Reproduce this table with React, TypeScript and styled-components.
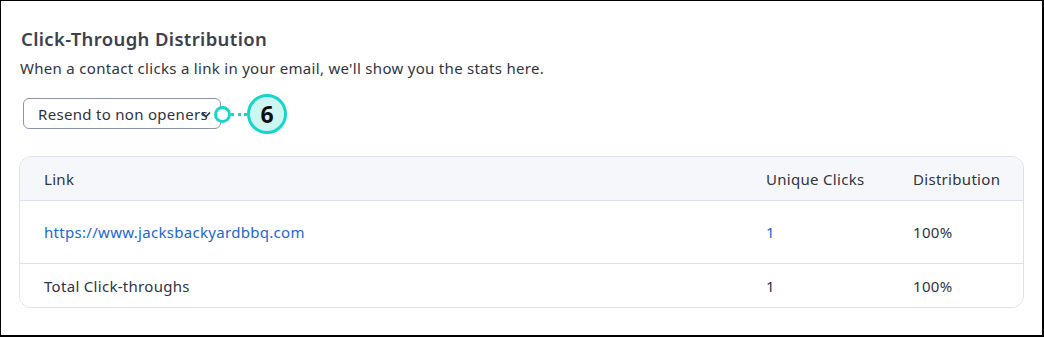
import React from "react";
import styled, { createGlobalStyle } from "styled-components";

const Global = createGlobalStyle`
  html, body { margin: 0; padding: 0; background: #fff; }
  body { font-family: "Noto Sans", "Open Sans", sans-serif; }
  * { box-sizing: border-box; }
`;

const Frame = styled.div`
  width: 1044px;
  height: 337px;
  border-style: solid;
  border-color: #000;
  border-width: 1px 2px 2px 1px;
  padding: 26px 18px 0 18px;
  display: flex;
  flex-direction: column;
  background: #fff;
`;

const Title = styled.h2`
  margin: 0 0 0 2px;
  font-size: 18.5px;
  line-height: 24px;
  font-weight: 600;
  color: #3d414e;
  letter-spacing: 0.35px;
`;

const Subtitle = styled.p`
  margin: 7px 0 0 1px;
  font-size: 15px;
  line-height: 20px;
  color: #2f3441;
  letter-spacing: 0.3px;
`;

const ControlRow = styled.div`
  margin: 20px 0 0 4px;
  display: flex;
  align-items: center;
  position: relative;
  height: 31px;
`;

const Select = styled.div`
  width: 198px;
  height: 31px;
  border: 1px solid #8c94a8;
  border-radius: 6px;
  display: flex;
  align-items: center;
  padding: 0 10px 0 14px;
  font-size: 15px;
  color: #2f3441;
  letter-spacing: 0.3px;
  white-space: nowrap;
  position: relative;
`;

const Chevron = styled.svg`
  position: absolute;
  right: 9px;
  top: 12px;
`;

const Callout = styled.div`
  position: absolute;
  left: 191px;
  top: -4px;
  display: flex;
  align-items: center;
`;

const Ring = styled.div`
  width: 17px;
  height: 17px;
  border-radius: 50%;
  border: 3px solid #15d6cc;
  background: #fff;
`;

const Dots = styled.div`
  width: 16px;
  height: 0;
  border-top: 3px dotted #15d6cc;
`;

const Badge = styled.div`
  width: 40px;
  height: 40px;
  border-radius: 50%;
  border: 3px solid #15d6cc;
  background: #cdf6f3;
  display: flex;
  align-items: center;
  justify-content: center;
  font-family: "Noto Sans", sans-serif;
  font-weight: 700;
  font-size: 23px;
  color: #0d0d0d;
`;

const Table = styled.div`
  margin-top: 27px;
  border: 1px solid #dde0ea;
  border-radius: 12px;
  overflow: hidden;
`;

const Row = styled.div<{ $head?: boolean; $h: number; $last?: boolean }>`
  display: grid;
  grid-template-columns: 1fr 147px 134px;
  height: ${(p) => p.$h}px;
  align-items: center;
  background: ${(p) => (p.$head ? "#f6f7fb" : "#fff")};
  border-bottom: ${(p) => (p.$last ? "none" : "1px solid #dde0ea")};
`;

const Cell = styled.div<{ $link?: boolean }>`
  padding-left: 24px;
  font-size: 15px;
  letter-spacing: 0.3px;
  color: ${(p) => (p.$link ? "#1b67d4" : "#2f3441")};
`;

export default function App() {
  return (
    <>
      <Global />
      <Frame>
        <Title>Click-Through Distribution</Title>
        <Subtitle>
          When a contact clicks a link in your email, we'll show you the stats here.
        </Subtitle>
        <ControlRow>
          <Select>
            Resend to non openers
            <Chevron width="10" height="7" viewBox="0 0 10 7">
              <path d="M1 1.5 L5 5.5 L9 1.5" fill="none" stroke="#2f3441" strokeWidth="1.6" />
            </Chevron>
          </Select>
          <Callout>
            <Ring />
            <Dots />
            <Badge>6</Badge>
          </Callout>
        </ControlRow>
        <Table>
          <Row $head $h={44}>
            <Cell>Link</Cell>
            <Cell>Unique Clicks</Cell>
            <Cell>Distribution</Cell>
          </Row>
          <Row $h={63}>
            <Cell $link>https://www.jacksbackyardbbq.com</Cell>
            <Cell $link>1</Cell>
            <Cell>100%</Cell>
          </Row>
          <Row $h={43} $last>
            <Cell>Total Click-throughs</Cell>
            <Cell>1</Cell>
            <Cell>100%</Cell>
          </Row>
        </Table>
      </Frame>
    </>
  );
}
